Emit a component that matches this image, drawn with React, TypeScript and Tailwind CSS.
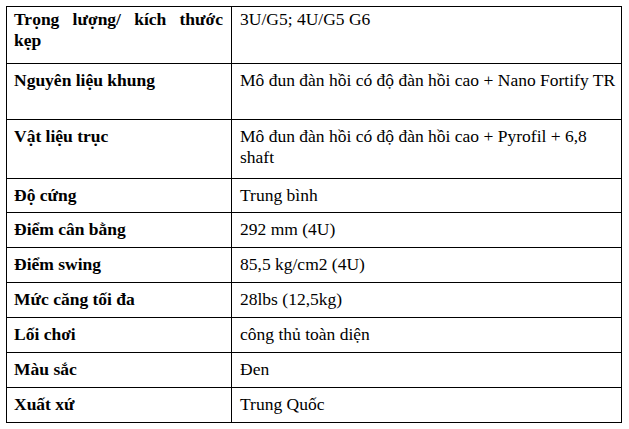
import React from 'react';

type Spec = {
  label: string;
  value: string;
  height: string;
  justify?: boolean;
};

// Thông số kỹ thuật vợt
const specs: Spec[] = [
  { label: 'Trọng lượng/ kích thước kẹp', value: '3U/G5; 4U/G5 G6', height: 'h-[57px]', justify: true },
  { label: 'Nguyên liệu khung', value: 'Mô đun đàn hồi có độ đàn hồi cao + Nano Fortify TR', height: 'h-[56px]' },
  { label: 'Vật liệu trục', value: 'Mô đun đàn hồi có độ đàn hồi cao + Pyrofil + 6,8 shaft', height: 'h-[59px]' },
  { label: 'Độ cứng', value: 'Trung bình', height: 'h-[34px]' },
  { label: 'Điểm cân bằng', value: '292 mm (4U)', height: 'h-[35px]' },
  { label: 'Điểm swing', value: '85,5 kg/cm2 (4U)', height: 'h-[35px]' },
  { label: 'Mức căng tối đa', value: '28lbs (12,5kg)', height: 'h-[35px]' },
  { label: 'Lối chơi', value: 'công thủ toàn diện', height: 'h-[35px]' },
  { label: 'Màu sắc', value: 'Đen', height: 'h-[35px]' },
  { label: 'Xuất xứ', value: 'Trung Quốc', height: 'h-[35px]' },
];

const cell = 'border border-black align-top text-[17.5px] leading-[21px]';

export default function App() {
  return (
    <div className="w-[629px] h-[429px] bg-white pt-[6px] pl-[6px] text-black [font-family:'Liberation_Serif','Times_New_Roman',serif]">
      <table className="border-collapse table-fixed w-[615px]">
        <colgroup>
          <col className="w-[225px]" />
          <col className="w-[390px]" />
        </colgroup>
        <tbody>
          {specs.map((s, i) => {
            const pad = i === 0 ? 'pt-[2px]' : 'pt-[6px]';
            return (
              <tr key={s.label} className={s.height}>
                <td className={`${cell} ${pad} pl-[7px] pr-[8px] font-bold ${s.justify ? 'text-justify' : ''}`}>
                  {s.label}
                </td>
                <td className={`${cell} ${pad} pl-[8px] pr-[2px]`}>{s.value}</td>
              </tr>
            );
          })}
        </tbody>
      </table>
    </div>
  );
}
